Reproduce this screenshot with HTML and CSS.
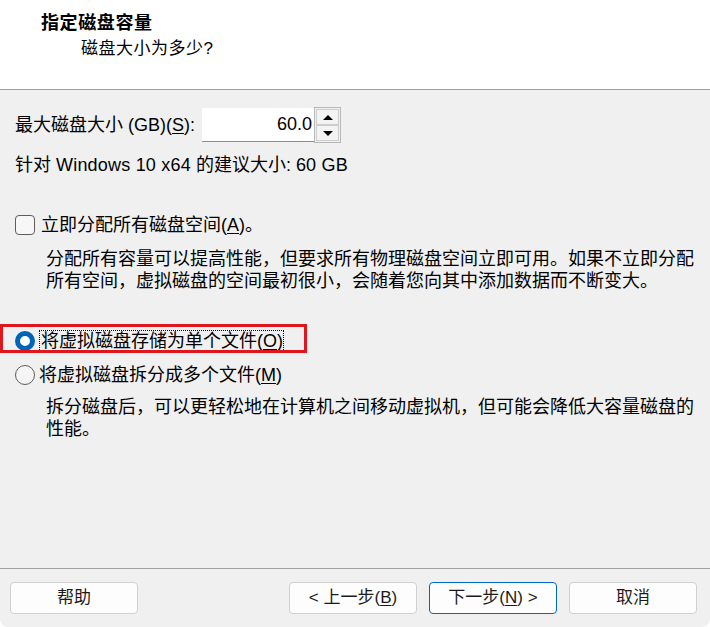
FILE: index.html
```html
<!DOCTYPE html>
<html lang="zh-CN">
<head>
<meta charset="utf-8">
<title>指定磁盘容量</title>
<link rel="stylesheet" href="styles.css">
</head>
<body>
<div class="window">
  <header class="header">
    <div class="title">指定磁盘容量</div>
    <div class="subtitle">磁盘大小为多少?</div>
  </header>
  <main class="content">
    <div class="size-row">
      <span class="label">最大磁盘大小 (GB)(<u>S</u>):</span>
      <div class="spin">
        <div class="spin-input">60.0</div>
        <div class="spin-buttons">
          <div class="spin-btn"><span class="tri-up"></span></div>
          <div class="spin-btn"><span class="tri-down"></span></div>
        </div>
      </div>
    </div>
    <div class="hint">针对 <span class="latin">Windows 10 x64</span> 的建议大小: <span class="latin">60 GB</span></div>

    <div class="check-row">
      <span class="checkbox"></span>
      <span class="label">立即分配所有磁盘空间(<u>A</u>)。</span>
    </div>
    <p class="desc desc-first">分配所有容量可以提高性能，但要求所有物理磁盘空间立即可用。如果不立即分配所有空间，虚拟磁盘的空间最初很小，会随着您向其中添加数据而不断变大。</p>

    <div class="radio-row radio-first">
      <span class="radio checked"></span>
      <span class="label focus">将虚拟磁盘存储为单个文件(<u>O</u>)</span>
      <span class="highlight"></span>
    </div>
    <div class="radio-row radio-second">
      <span class="radio"></span>
      <span class="label">将虚拟磁盘拆分成多个文件(<u>M</u>)</span>
    </div>
    <p class="desc desc-second">拆分磁盘后，可以更轻松地在计算机之间移动虚拟机，但可能会降低大容量磁盘的性能。</p>
  </main>
  <footer class="footer">
    <button class="btn">帮助</button>
    <div class="nav">
      <button class="btn">&lt; 上一步(<u>B</u>)</button>
      <button class="btn primary">下一步(<u>N</u>) &gt;</button>
      <button class="btn">取消</button>
    </div>
  </footer>
</div>
</body>
</html>
```

FILE: styles.css
```css
html {
  background: #ffffff;
}
body {
  margin: 0;
  font-family: "Liberation Sans", "Noto Sans CJK SC", sans-serif;
  font-size: 18px;
  color: #000;
}
.window {
  width: 710px;
  height: 627px;
  background: #f0f0f0;
  display: flex;
  flex-direction: column;
  border-radius: 0 0 8px 8px;
  overflow: hidden;
}
u {
  text-decoration-thickness: 1px;
  text-underline-offset: 2px;
}
.latin {
  letter-spacing: 0.2px;
}

/* header */
.header {
  height: 90px;
  box-sizing: border-box;
  background: #ffffff;
  border-bottom: 1px solid #a0a0a0;
  padding: 12px 0 0 41px;
}
.title {
  font-weight: bold;
  line-height: 22px;
  letter-spacing: 0.6px;
}
.subtitle {
  margin-top: 4px;
  padding-left: 40px;
  font-size: 17px;
  line-height: 22px;
  letter-spacing: 0.5px;
}

/* content */
.content {
  flex: 1;
  padding: 0 15px;
  display: flex;
  flex-direction: column;
}
.label {
  line-height: 22px;
}
.size-row {
  margin-top: 18px;
  height: 34px;
  display: flex;
  align-items: center;
}
.spin {
  margin-left: 7px;
  display: flex;
  align-items: stretch;
  height: 34px;
}
.spin-input {
  width: 112px;
  box-sizing: border-box;
  background: #ffffff;
  border-bottom: 1px solid #8c8c8c;
  text-align: right;
  padding-right: 2px;
  line-height: 33px;
}
.spin-buttons {
  width: 27px;
  box-sizing: border-box;
  margin-top: -1px;
  height: 36px;
  border: 1px solid #b8b8b8;
  padding: 1px;
  display: flex;
  flex-direction: column;
  background: #f0f0f0;
}
.spin-btn {
  flex: 1;
  border: 1px solid #cdcdcd;
  background: #f3f3f3;
  display: flex;
  align-items: center;
  justify-content: center;
}
.tri-up {
  width: 0;
  height: 0;
  border-left: 5px solid transparent;
  border-right: 5px solid transparent;
  border-bottom: 5px solid #000;
}
.tri-down {
  width: 0;
  height: 0;
  border-left: 5px solid transparent;
  border-right: 5px solid transparent;
  border-top: 5px solid #000;
}
.hint {
  margin-top: 12px;
  line-height: 22px;
}

.check-row {
  margin-top: 38px;
  display: flex;
  align-items: center;
  gap: 6px;
}
.checkbox {
  width: 20px;
  height: 20px;
  box-sizing: border-box;
  border: 1px solid #5c5c5c;
  border-radius: 4px;
  background: #f7f7f7;
}
.desc {
  margin: 0 0 0 31px;
  line-height: 22px;
}
.desc-first {
  margin-top: 12px;
}
.desc-second {
  margin-top: 10px;
}

.radio-row {
  position: relative;
  display: flex;
  align-items: center;
  gap: 4px;
}
.radio-first {
  margin-top: 38px;
}
.radio-second {
  margin-top: 12px;
}
.radio {
  width: 20px;
  height: 20px;
  box-sizing: border-box;
  border-radius: 50%;
  border: 1px solid #5c5c5c;
  background: #f5f5f5;
}
.radio.checked {
  border: 5.5px solid #0063b8;
  background: #ffffff;
}
.focus {
  outline: 1px dotted #000;
  outline-offset: -1px;
  padding: 0 1px 0 2px;
}
.highlight {
  position: absolute;
  left: -15px;
  top: -6px;
  width: 307px;
  height: 29px;
  box-sizing: border-box;
  border: 3px solid #e0161d;
  pointer-events: none;
}

/* footer */
.footer {
  height: 59px;
  box-sizing: border-box;
  border-top: 1px solid #a0a0a0;
  padding: 13px 13px 0 10px;
  display: flex;
  align-items: flex-start;
}
.nav {
  margin-left: auto;
  display: flex;
  gap: 12px;
}
.btn {
  width: 128px;
  height: 32px;
  box-sizing: border-box;
  border: 1px solid #d0d0d0;
  border-radius: 4px;
  background: #fdfdfd;
  font-family: "Liberation Sans", "Noto Sans CJK SC", sans-serif;
  font-size: 17px;
  color: #1b1b1b;
  padding: 0;
  line-height: 30px;
}
.btn.primary {
  border-color: #0067c0;
}
```
